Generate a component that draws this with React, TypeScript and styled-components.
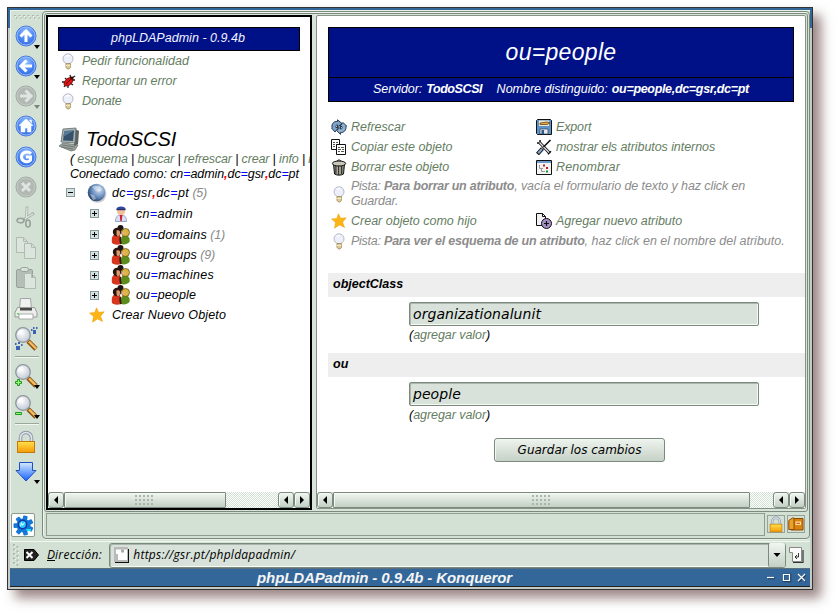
import React from 'react';
import styled, { createGlobalStyle } from 'styled-components';

const Global = createGlobalStyle`
  * { box-sizing: border-box; }
  body { margin: 0; background: #fff; overflow: hidden; }
`;

/* ---------- window ---------- */

const Desktop = styled.div`
  width: 836px;
  height: 613px;
  padding: 7px 0 0 7px;
  background: #fff;
  overflow: hidden;
  font: italic 12.5px/20px 'Liberation Sans', Arial, sans-serif;
  color: #000;
`;

const Window = styled.div`
  width: 806px;
  height: 583px;
  border: 1px solid #333;
  background: linear-gradient(#336699 0 20px, #c3cbc4 20px);
  padding: 2px 2px 2px 2px;
  box-shadow: 8px 8px 11px rgba(95, 62, 62, 0.62);
  display: flex;
  flex-direction: column;
`;

const Body = styled.div`
  display: flex;
  height: 531px;
  background: #d3e1d4;
  border-top: 1px solid #e9f1ea;
  border-left: 1px solid #eef4ee;
`;

const Toolbar = styled.div`
  width: 31px;
  display: flex;
  flex-direction: column;
  align-items: center;
  padding-top: 3px;
`;

const Slot = styled.div<{ $h?: number }>`
  width: 31px;
  height: ${(p) => p.$h ?? 30.4}px;
  flex: none;
  display: flex;
  align-items: center;
  justify-content: center;
  padding-right: 1px;
  position: relative;
`;

const DropMark = styled.i<{ $dim?: boolean }>`
  position: absolute;
  right: 2px;
  bottom: 2px;
  border: solid transparent;
  border-width: 4px 3.5px 0;
  border-top-color: ${(p) => (p.$dim ? '#7d857e' : '#000')};
`;

const ToolRule = styled.div`
  width: 24px;
  height: 2px;
  margin: 2px 0 2px;
  flex: none;
  border-top: 1px solid #9aa79b;
  border-bottom: 1px solid #f2f7f2;
`;

const GearTile = styled.div`
  width: 24px;
  height: 24px;
  margin-top: 27px;
  margin-right: 7px;
  flex: none;
  background: #fff;
  border: 1px solid #8b988c;
  border-radius: 2px;
  display: flex;
  align-items: center;
  justify-content: center;
`;

/* ---------- main frame ---------- */

const MainFrame = styled.div`
  flex: 1;
  height: 528px;
  border: 1px solid #7c8a7d;
  border-radius: 4px;
  box-shadow: inset 1px 1px #eef4ee, 0 1px #e8f0e8;
  padding: 1px;
  display: flex;
  flex-direction: column;
`;

const Frames = styled.div`
  height: 500px;
  border: 1px solid #7c8a7d;
  border-radius: 3px;
  background: #d8e4d9;
  padding: 1px;
  display: flex;
  gap: 4px;
`;

const Frame = styled.div<{ $active?: boolean }>`
  width: ${(p) => (p.$active ? '266px' : 'auto')};
  flex: ${(p) => (p.$active ? 'none' : '1')};
  height: ${(p) => (p.$active ? 495 : 494)}px;
  border: ${(p) => (p.$active ? '2px solid #000' : '1px solid #859286')};
  border-radius: ${(p) => (p.$active ? 0 : 2)}px;
  background: #fff;
  display: flex;
  flex-direction: column;
  overflow: hidden;
  white-space: nowrap;
`;

const FrameBody = styled.div<{ $pad: string }>`
  flex: 1;
  min-height: 0;
  padding: ${(p) => p.$pad};
  overflow: hidden;
`;

const ScrollBar = styled.div`
  height: 16px;
  flex: none;
  display: flex;
  background: repeating-conic-gradient(#d3e1d4 0 25%, #fff 0 50%) 0 0 / 2px 2px;
`;

const ScrollButton = styled.div`
  width: 16px;
  height: 16px;
  flex: none;
  border: 1px solid #7c8a7d;
  border-radius: 3px;
  background: linear-gradient(#f0f6f0, #c3cfc4);
  box-shadow: inset 1px 1px #f4f8f4;
  display: flex;
  align-items: center;
  justify-content: center;
`;

const Thumb = styled(ScrollButton)<{ $w: number }>`
  width: ${(p) => p.$w}px;
  border-radius: 1px;
`;

const Grip = styled.div`
  width: 20px;
  height: 12px;
  background: radial-gradient(circle at 1px 1px, #a9b6aa 1px, transparent 1.2px) 0 1px / 4px 4px;
`;

const Spacer = styled.div`
  flex: 1;
`;

const StatusBar = styled.div`
  flex: 1;
  display: flex;
  gap: 2px;
  padding: 1px 3px 1px 2px;
`;

const StatusCell = styled.div`
  flex: 1;
  height: 23px;
  border: 1px solid #8f9c90;
`;

const StatusIcon = styled.div`
  width: 18px;
  height: 18px;
  margin-top: 2px;
  border: 1px solid #97a398;
  display: flex;
  align-items: center;
  justify-content: center;
`;

/* ---------- text pieces ---------- */

const T = styled.span<{ $ls?: number }>`
  letter-spacing: ${(p) => p.$ls ?? 0}px;
  white-space: pre;
`;

const Link = styled(T)`
  color: #657d62;
`;

const Muted = styled(T)`
  color: #8c8c8c;
`;

const Strong = styled(T)`
  font-weight: bold;
`;

const Eq = styled.span`
  color: #0000ff;
`;

const Comma = styled.span`
  color: #ff0000;
  font-weight: bold;
`;

const Version = styled.div`
  width: 242px;
  height: 24px;
  border: 1px solid #000;
  background: #001188;
  color: #f2f2ff;
  text-align: center;
  line-height: 20px;
  padding-right: 2px;
`;

const IconRow = styled.div<{ $h?: number; $indent?: number }>`
  height: ${(p) => p.$h ?? 20}px;
  line-height: 20px;
  padding-left: ${(p) => p.$indent ?? 0}px;
  display: flex;
  align-items: center;
`;

const IconBox = styled.span<{ $w: number; $gap?: number }>`
  width: ${(p) => p.$w}px;
  margin-right: ${(p) => p.$gap ?? 0}px;
  flex: none;
  display: flex;
  justify-content: center;
  align-items: center;
`;

const ServerRow = styled.div`
  display: flex;
  align-items: center;
  height: 26px;
  margin-top: 15px;
  gap: 6px;
  font-size: 20px;
`;

const TextLine = styled.div`
  height: 15px;
  line-height: 15px;
  padding-left: 12px;
`;

const Expander = styled.span`
  width: 9px;
  height: 9px;
  flex: none;
  border: 1px solid #869a9a;
  background: linear-gradient(#000, #000) center / 5px 1px no-repeat, #d5e2e4;
`;

const ExpanderPlus = styled(Expander)`
  background: linear-gradient(#000, #000) center / 5px 1px no-repeat,
    linear-gradient(#000, #000) center / 1px 5px no-repeat, #d5e2e4;
`;

const Banner = styled.div`
  width: 466px;
  height: 75px;
  border: 1px solid #000;
  background: #001188;
  color: #fff;
  text-align: center;
`;

const BannerTitle = styled.div`
  height: 50px;
  line-height: 49px;
  font-size: 23px;
  border-bottom: 1px solid #000;
`;

const BannerInfo = styled.div`
  height: 23px;
  line-height: 22px;
  display: flex;
  justify-content: center;
  gap: 4px;
`;

const Actions = styled.div`
  display: grid;
  grid-template-columns: 205px 1fr;
  margin: 15px 0 22px;
`;

const Wide = styled.div`
  grid-column: 1 / -1;
`;

const Hint = styled.div`
  line-height: 15px;
  color: #8c8c8c;
`;

const AttrName = styled.div`
  height: 24px;
  line-height: 23px;
  background: #eeeeee;
  padding-left: 5px;
  font-weight: bold;
`;

const AttrBody = styled.div`
  height: 56px;
  padding: 5px 0 0 81px;
  line-height: 18px;
`;

const Field = styled.div`
  width: 350px;
  height: 24px;
  border: 1px solid #7c8a7d;
  border-radius: 2px;
  box-shadow: inset 1px 1px #aab6ab, inset -1px -1px #f5faf5;
  background: #d8e2da;
  padding-left: 3px;
  font: italic 14px/22px 'DejaVu Sans', sans-serif;
`;

const SaveButton = styled.div`
  width: 171px;
  height: 24px;
  margin: 5px 0 0 166px;
  border: 1px solid #7c8a7d;
  border-radius: 3px;
  box-shadow: inset 1px 1px #f2f7f2;
  background: linear-gradient(#eef4ee, #c6d1c7);
  font: italic 12px/22px 'DejaVu Sans', sans-serif;
  text-align: center;
`;

/* ---------- bottom bars ---------- */

const AddressBar = styled.div`
  height: 27px;
  background: #d3e1d4;
  border-top: 1px solid #f2f7f2;
  display: flex;
  align-items: center;
  padding: 0 6px 0 3px;
`;

const AddressLabel = styled.div`
  width: 66px;
  flex: none;
  padding-left: 4px;
  font: italic 12px/20px 'Open Sans', sans-serif;
`;

const Combo = styled.div`
  width: 677px;
  height: 25px;
  flex: none;
  border: 1px solid #7c8a7d;
  border-radius: 3px;
  background: #d8e2da;
  box-shadow: inset 1px 1px #a9b5aa, inset 0 -1px #f7fbf7;
  display: flex;
  align-items: center;
  padding-left: 3px;
  font: italic 12px/20px 'Open Sans', sans-serif;
`;

const ComboButton = styled.div`
  width: 17px;
  height: 24px;
  border-left: 1px solid #7c8a7d;
  border-radius: 2px;
  background: linear-gradient(#f0f6f0, #c3cfc4);
  display: flex;
  align-items: center;
  justify-content: center;
`;

const TitleBar = styled.div`
  height: 19px;
  background: #336699;
  border-bottom: 1px solid #222;
  border-top: 1px solid #5b6f7d;
  display: flex;
  align-items: center;
  justify-content: flex-end;
  gap: 8px;
  padding-right: 4px;
`;

const Title = styled.div`
  flex: 1;
  padding-left: 247px;
  color: #f4f4f4;
  font: italic bold 15px/17px 'Liberation Sans', Arial, sans-serif;
`;

/* ---------- icons ---------- */

const Gradients = styled.svg`
  position: absolute;
`;

const Defs = () => (
  <Gradients width="0" height="0">
    <defs>
      <radialGradient id="blue" cx=".5" cy=".3" r=".8">
        <stop offset="0" stopColor="#9cc4ff" />
        <stop offset=".5" stopColor="#4a86f2" />
        <stop offset="1" stopColor="#2c62dd" />
      </radialGradient>
      <linearGradient id="gold" x2="0" y2="1">
        <stop offset="0" stopColor="#ffe14a" />
        <stop offset="1" stopColor="#f59a08" />
      </linearGradient>
      <linearGradient id="down" x2="0" y2="1">
        <stop offset="0" stopColor="#d5eaff" />
        <stop offset="1" stopColor="#1560ff" />
      </linearGradient>
      <radialGradient id="glass" cx=".4" cy=".35" r=".7">
        <stop offset="0" stopColor="#ffffff" />
        <stop offset="1" stopColor="#bcc6d2" />
      </radialGradient>
      <radialGradient id="globe" cx=".65" cy=".35" r=".75">
        <stop offset="0" stopColor="#d4e0ee" />
        <stop offset=".5" stopColor="#6f95c4" />
        <stop offset="1" stopColor="#1c3764" />
      </radialGradient>
    </defs>
  </Gradients>
);

const Round = ({ d, dim, fill }: { d: string; dim?: boolean; fill?: boolean }) => (
  <svg width="22" height="22" viewBox="0 0 22 22">
    <circle cx="11" cy="11" r="10" fill={dim ? '#b2b9b3' : 'url(#blue)'} stroke={dim ? '#a1a9a2' : '#4878dc'} />
    <circle cx="11" cy="11" r="9" fill="none" stroke={dim ? '#c8cec9' : '#a9c8ff'} strokeWidth=".8" />
    <path
      d={d}
      fill={fill ? (dim ? '#dfe5e0' : '#fff') : 'none'}
      stroke={dim ? '#dfe5e0' : '#fff'}
      strokeWidth={fill ? 0.5 : 3}
    />
  </svg>
);

const Scissors = () => (
  <svg width="20" height="24" viewBox="0 0 20 24" fill="none">
    <path d="M11 1.500 10.500 14M18 8 8 14.500" stroke="#a9b2aa" strokeWidth="2.800" />
    <path d="M11 2.500 10.500 13M17 8.800 9 13.800" stroke="#dde5de" strokeWidth="1.200" />
    <ellipse cx="4.500" cy="15.500" rx="3.500" ry="2.300" stroke="#98a199" strokeWidth="1.600" />
    <ellipse cx="12" cy="18.500" rx="2.200" ry="3.500" stroke="#98a199" strokeWidth="1.600" />
  </svg>
);

const Pages = () => (
  <svg width="22" height="24" viewBox="0 0 22 24" fill="#dce5dd" stroke="#b0bab1">
    <path d="M1.500 1.500h7l4 4v11h-11zM8.500 1.500v4h4" />
    <path d="M9.500 7.500h7l4 4v11h-11zM16.500 7.500v4h4" />
  </svg>
);

const Paste = () => (
  <svg width="22" height="24" viewBox="0 0 22 24" stroke="#98a299">
    <rect x="1.500" y="3.500" width="16" height="18" rx="1.500" fill="#b5beb6" />
    <rect x="5.500" y="1.500" width="8" height="4" rx="2" fill="#d9e0da" />
    <path d="M9.500 7.500h7l4 4v11h-11zM16.500 7.500v4h4" fill="#dce5dd" stroke="#b0bab1" />
  </svg>
);

const Printer = () => (
  <svg width="24" height="24" viewBox="0 0 24 24">
    <path d="M6.500 1.500h10l1 10h-12z" fill="#f1f1f1" stroke="#a5a5a5" />
    <path d="M3.500 10.500h17l2.500 5v4.500H1v-4.500z" fill="#ececec" stroke="#9a9a9a" />
    <path d="M6 11h12v2.500H6z" fill="#4a4a4a" />
    <path d="M5 17h14v5H5z" fill="#fff" stroke="#999" strokeWidth=".8" />
    <path d="M3 16h2v1.500H3z" fill="#5d5" />
  </svg>
);

const Magnifier = ({ kind }: { kind: 'plus' | 'minus' | 'paw' }) => (
  <svg width="24" height="25" viewBox="0 0 24 25">
    <path d="m14 15 8 8" stroke="#8a5514" strokeWidth="4.600" />
    <path d="m15 15.500 7 7" stroke="#f7bd62" strokeWidth="2.400" />
    <circle cx="9" cy="9" r="7.300" fill="url(#glass)" stroke="#8d949e" strokeWidth="1.300" />
    <path d="M4.500 9A4.500 4.500 0 0 1 9 4.500" fill="none" stroke="#fff" strokeWidth="1.500" />
    {kind === 'paw' ? (
      <g fill="#3b63b5">
        <path d="M2 20h4v4H2zM1 17h1.500v2H1zM4 16h2v2H4zM7 18h1.500v2H7z" />
        <path d="M19 4h3v4h-3zM17 3h1.500v2H17zM19 1h1.500v2H19zM22 1h1.500v2H22z" />
      </g>
    ) : kind === 'plus' ? (
      <path d="M3.500 16.500h2v2h2v2h-2v2h-2v-2h-2v-2h2z" fill="#9df77a" stroke="#1b9a1b" />
    ) : (
      <path d="M1.500 18.500h6v2h-6z" fill="#9df77a" stroke="#1b9a1b" />
    )}
  </svg>
);

const Lock = ({ w = 20, h = 24 }: { w?: number; h?: number }) => (
  <svg width={w} height={h} viewBox="0 0 20 24">
    <path d="M4.500 12V8a5.500 5.500 0 0 1 11 0v4" fill="none" stroke="#8e98a8" strokeWidth="3.600" />
    <path d="M4.500 12V8a5.500 5.500 0 0 1 11 0v4" fill="none" stroke="#dfe5ee" strokeWidth="1.600" />
    <rect x="1.500" y="11.500" width="17" height="11" fill="url(#gold)" stroke="#c27a0a" />
  </svg>
);

const DownArrow = () => (
  <svg width="22" height="21" viewBox="0 0 22 21">
    <path d="M4.500 1.500h13v8h3.500L11 20 1 9.500h3.500z" fill="url(#down)" stroke="#1c50c0" />
  </svg>
);

const Gear = () => (
  <svg width="21" height="21" viewBox="0 0 21 21">
    <g fill="#1478d8">
      {[0, 51, 103, 154, 206, 257, 309].map((a) => (
        <rect key={a} x="8.200" y="0.500" width="4.600" height="7" rx="1" transform={`rotate(${a + 12} 10.500 10.500)`} />
      ))}
      <circle cx="10.500" cy="10.500" r="7" />
    </g>
    <circle cx="9.500" cy="9.500" r="4.200" fill="#24c8ff" stroke="#1238a8" strokeWidth="1.500" />
    <path d="m7.500 11.500 1-4 1 3 2-3" stroke="#e0ffff" fill="none" />
    <path d="M13 14h5v2h-4z" fill="#1de6f2" />
  </svg>
);

const Bulb = () => (
  <svg width="14" height="17" viewBox="0 0 14 17">
    <circle cx="7" cy="5.800" r="5" fill="#edf0fa" stroke="#b4b7c6" />
    <path d="M5 3.500a3 3 0 0 1 3-1" stroke="#fff" fill="none" strokeWidth="1.500" />
    <path d="M5 10.500h4.500v4L8 16H6.500L5 14.500z" fill="#dcc893" stroke="#9c8b62" strokeWidth=".8" />
    <path d="M5 12.500h4.500" stroke="#fff2c8" strokeWidth=".8" />
  </svg>
);

const Bug = () => (
  <svg width="15" height="15" viewBox="0 0 15 15">
    <path d="M1 8h3M3 13l2-3M7 14V11M4 4l2 2M9 1l1 3M14 2l-3 2M14 6h-4M12 11l-3-2" stroke="#222" strokeWidth="1.300" />
    <ellipse cx="7.500" cy="7.800" rx="5.300" ry="3.200" fill="#dd1414" stroke="#600" strokeWidth=".7" transform="rotate(-42 7.500 7.800)" />
    <path d="m5 10 6-6" stroke="#500" />
    <circle cx="11" cy="4" r="1.500" fill="#300" />
  </svg>
);

const Computer = () => (
  <svg width="22" height="25" viewBox="0 0 22 25">
    <path d="m1 19 4-3 15 2-3 5-4 1z" fill="#9aa39e" stroke="#6e7672" strokeWidth=".8" />
    <path d="m4 18 13 2M3 20l12 2" stroke="#606964" strokeWidth=".7" />
    <path d="m17 2 4 2-1 13-4 2z" fill="#59635f" />
    <path d="m5 2 13-1-1 15-14-1z" fill="#aab4b3" stroke="#606b69" strokeWidth=".8" />
    <path d="m6.500 4 9.500-.5-1 10.500-10-.5z" fill="#35516c" />
    <path d="m6.500 4 9.500-.5-11 6.500z" fill="#587a98" />
  </svg>
);

const Globe = () => (
  <svg width="20" height="20" viewBox="0 0 20 20">
    <circle cx="10.500" cy="10.800" r="9" fill="#ccc" />
    <circle cx="9.500" cy="9.500" r="8.800" fill="url(#globe)" />
    <path d="M5 4c3-2 5 0 8-1l2 4-4 2-3-2zM3 11l4 1 2 4-3 1z" fill="#fff" opacity=".4" />
  </svg>
);

const Person = () => (
  <svg width="14" height="17" viewBox="0 0 14 17">
    <path d="M1.500 16.500c0-5 2-6.500 5.500-6.500s5.500 1.500 5.500 6.500z" fill="#d9e0f5" stroke="#9ba5c9" />
    <path d="m6.200 10 .8 6 1-6z" fill="#d11a2a" stroke="#d11a2a" />
    <circle cx="7" cy="6" r="4" fill="#f4bf98" />
    <path d="M2.300 4.500C2 .5 12 .5 11.700 4.500z" fill="#2f48a4" />
    <path d="M2.500 4.700h9" stroke="#111b50" />
  </svg>
);

const People = () => (
  <svg width="20" height="20" viewBox="0 0 20 20">
    <circle cx="9.500" cy="3" r="3" fill="#20140f" />
    <path d="M1 18c-1-6 1-9 5-9 3 0 5 3 4 10-3 1-7 1-9-1z" fill="#d9341c" />
    <path d="M10 19c-1-6 1-9 4-9s5.500 3 4.500 7c-2 2-5 3-8.500 2z" fill="#5c8c1c" />
    <circle cx="6" cy="7" r="4.200" fill="#26160f" />
    <path d="M5.500 5.500c2-1 4.500 0 3.500 3.500s-3.500 2-3.500 0z" fill="#dc9968" />
    <circle cx="14.500" cy="7.500" r="4" fill="#dcb63c" stroke="#5b4518" strokeWidth=".7" />
    <path d="M11 7c1-1 3.500-1 3.500 1s-2.500 3-3.500 1z" fill="#e8ad78" />
    <path d="M9.500 12c-1 2 0 5 .5 7" stroke="#2b1a10" strokeWidth="1.600" fill="none" />
  </svg>
);

const Star = () => (
  <svg width="16" height="16" viewBox="0 0 16 16">
    <path d="m7.500.8 2.100 4.500 5.600-.5-3.600 4.400 2 5.300-5-2.600-5.100 3.300 1-5.900L.5 6l5.200-.5z" fill="#fdb515" stroke="#e99a0a" strokeWidth=".5" />
  </svg>
);

const Refresh = () => (
  <svg width="16" height="16" viewBox="0 0 16 16">
    <path d="M1 8.500C.5 4.500 3 2 6.500 2.500V.8L11 4.500 6.500 8V6C5 6 4.500 7 5 8.500L7.500 8.500 4 13 .5 9z" fill="#7fa4cb" stroke="#25384e" strokeWidth="1" />
    <path d="M15 7c.5 4-2 6.800-5.500 6.500v1.800L5.500 11.500 9.500 8v2c1.500 0 2-1 1.500-2.500H8.800L12 3.500 15.500 7z" fill="#8fb0d2" stroke="#25384e" strokeWidth="1" />
  </svg>
);

const Copy = () => (
  <svg width="16" height="16" viewBox="0 0 16 16" fill="#fff" stroke="#111">
    <path d="M.5.5h8v10h-8z" />
    <path d="M2 3.500h2m1 0h2M2 5.500h2m1 0h2M2 7.500h2" stroke="#555" />
    <path d="M5.500 5.500h9v10h-9z" />
    <path d="M7 8.500h2m1 0h3M7 10.500h3m1 0h2M7 12.500h2m1 0h3" stroke="#555" />
  </svg>
);

const Trash = () => (
  <svg width="16" height="17" viewBox="0 0 16 17">
    <path d="m2.500 5 1 10c2 1.500 7 1.500 9 0l1-10z" fill="#8d8b7d" stroke="#111" />
    <path d="M5 7v8M7.500 7v9M10.500 7v8" stroke="#34332c" strokeWidth="1.200" />
    <path d="M6.200 7v8M9 7v8" stroke="#cfcdbc" strokeWidth=".8" />
    <ellipse cx="8" cy="4.500" rx="6.700" ry="2.500" fill="#c9c7b8" stroke="#111" />
    <path d="M6 2.500C6 .5 10 .5 10 2.500" stroke="#111" fill="none" />
  </svg>
);

const Floppy = () => (
  <svg width="16" height="16" viewBox="0 0 16 16">
    <path d="M.5 1.500 1.500.500h13l1 1v14h-14l-1-1z" fill="#5c93c8" stroke="#111" />
    <path d="M3 1.500h10v5.500H3z" fill="#f1e6cc" />
    <path d="m4 4 7-1 3 1-3 1.500H4z" fill="#e9a83c" stroke="#513b13" strokeWidth=".7" />
    <path d="M4 10h8v5H4z" fill="#e2e6ea" stroke="#234" strokeWidth=".6" />
    <path d="M5.500 11h2.500v4H5.500z" fill="#2d5d8f" />
  </svg>
);

const Tools = () => (
  <svg width="16" height="16" viewBox="0 0 16 16" fill="none">
    <path d="m3.500 3.500 10 10.500" stroke="#111" strokeWidth="3" />
    <path d="M1 4h3V1M12 15.200l3-3" stroke="#111" strokeWidth="1.500" />
    <path d="m3.500 3.500 9.500 10" stroke="#e2e2e2" strokeWidth="1.200" />
    <path d="m14.500 1-7 7" stroke="#111" strokeWidth="1.600" />
    <path d="m6.500 9.500-5 5.500" stroke="#111" strokeWidth="4" />
    <path d="m6 10-3.800 4.200" stroke="#7fa6d0" strokeWidth="2.200" />
  </svg>
);

const Rename = () => (
  <svg width="16" height="15" viewBox="0 0 16 15">
    <path d="M.5.5h15v14H.5z" fill="#f3f3f3" stroke="#111" />
    <path d="M1 1h14v2H1z" fill="#6d9bcf" />
    <path d="M3.500 5v3.500H7M5.500 8.500v3H9" stroke="#999" fill="none" />
    <path d="M7 4.500h2v2H7z" fill="#c01c1c" />
    <path d="M10 7h2v2h-2z" fill="#c01c1c" />
    <path d="M10 10.500h2v2h-2z" fill="#1d8d2a" />
  </svg>
);

const AddAttr = () => (
  <svg width="16" height="16" viewBox="0 0 16 16">
    <path d="M.5.5h6l3 3v9h-9zM6.500.5v3h3" fill="#f1f1f4" stroke="#111" />
    <circle cx="10.500" cy="10.500" r="5" fill="#a58fc4" stroke="#111" />
    <path d="M10.500 8v5M8 10.500h5" stroke="#111" strokeWidth="1.200" />
  </svg>
);

const Folder = () => (
  <svg width="16" height="16" viewBox="0 0 16 16">
    <path d="M5 2.500h10V14H3z" fill="#d9820e" stroke="#8c4c04" />
    <path d="m.8 4.500 3.700-2.500h1.500v11.500l-5.200 0z" fill="#eda02a" stroke="#8c4c04" />
    <path d="M7.500 5.500H13V9H7.500z" fill="#ffdca0" />
    <path d="M8.500 7.300h3.500" stroke="#c04a00" />
  </svg>
);

const Handle = () => (
  <svg width="26" height="6" viewBox="0 0 26 6">
    {[0, 1, 2, 3, 4, 5].map((i) => (
      <g key={i}>
        <path d={`M${i * 4.5} 1h2v1.500h-2zM${i * 4.5 + 2} 3.500h2V5h-2z`} fill="#aab7ab" />
        <path d={`M${i * 4.5 + 1} 2h1v1h-1zM${i * 4.5 + 3} 4.500h1v1h-1z`} fill="#fff" />
      </g>
    ))}
  </svg>
);

const VHandle = () => (
  <svg width="7" height="22" viewBox="0 0 7 22">
    {[0, 1, 2, 3, 4].map((i) => (
      <g key={i}>
        <path d={`M0 ${i * 4.5}h2v2H0zM3.500 ${i * 4.5 + 2}h2v2h-2z`} fill="#aab7ab" />
        <path d={`M1.500 ${i * 4.5 + 1.5}h1v1h-1zM5 ${i * 4.5 + 3.5}h1v1H5z`} fill="#fff" />
      </g>
    ))}
  </svg>
);

const ClearTag = () => (
  <svg width="15" height="12" viewBox="0 0 15 12">
    <path d="M.5.5h9.500l4.500 5.500-4.500 5.500H.5z" fill="#222" stroke="#000" />
    <path d="m2.500 3 6 6M8.500 3l-6 6" stroke="#fff" strokeWidth="2" />
  </svg>
);

const PageIcon = () => (
  <svg width="17" height="16" viewBox="0 0 17 16">
    <path d="M2 2h14v14H2z" fill="#111" />
    <path d="M1 0h14v15H1z" fill="#b9b9b9" />
    <path d="M3 2.500h11V13H5V7H3z" fill="#fff" />
    <path d="M8 2.500h3v3H8z" fill="#aaa" />
  </svg>
);

const GoIcon = () => (
  <svg width="15" height="17" viewBox="0 0 15 17">
    <path d="M4 15.500h10V3" stroke="#333" strokeWidth="1.200" fill="none" />
    <path d="M.5.5h12v14H3.500v-9h-3z" fill="#fafafa" stroke="#888" />
    <path d="M9.500 6v4H6m2-2-2 2 2 2" stroke="#333" fill="none" />
  </svg>
);

const Tri = ({ dir }: { dir: 'left' | 'right' | 'down' }) => (
  <svg width="8" height="8" viewBox="0 0 8 8">
    <path d={dir === 'left' ? 'M6 0v8L2 4z' : dir === 'right' ? 'M2 0v8l4-4z' : 'M.5 2h7L4 6z'} />
  </svg>
);

const WindowButtons = () => (
  <svg width="40" height="12" viewBox="0 0 40 12" fill="none">
    <g stroke="#1c3f63" strokeWidth="1.500">
      <path d="M2 6.500h7M18 2.500h6.500v7H18zM33 3l7 7M40 3l-7 7" />
    </g>
    <g stroke="#fff" strokeWidth="1.200">
      <path d="M1 5.500h7" />
      <path d="M17.500 2.500h6v6h-6z" />
      <path d="m32 2 7 7M39 2l-7 7" />
    </g>
  </svg>
);

/* ---------- composite pieces ---------- */

const Dn = ({ text, ls }: { text: string; ls?: number }) => (
  <T $ls={ls}>
    {text.split(/([=,])/).map((s, i) => (s === '=' ? <Eq key={i}>=</Eq> : s === ',' ? <Comma key={i}>,</Comma> : s))}
  </T>
);

const Scroll = ({ thumb }: { thumb: number }) => (
  <ScrollBar>
    <ScrollButton><Tri dir="left" /></ScrollButton>
    <Thumb $w={thumb}><Grip /></Thumb>
    <Spacer />
    <ScrollButton><Tri dir="left" /></ScrollButton>
    <ScrollButton><Tri dir="right" /></ScrollButton>
  </ScrollBar>
);

const Action = ({ icon, label, ls }: { icon: React.ReactNode; label: string; ls?: number }) => (
  <IconRow $indent={2}>
    <IconBox $w={17} $gap={4}>{icon}</IconBox>
    <Link $ls={ls}>{label}</Link>
  </IconRow>
);

const TreeRow = ({ name, ls, count, h, icon }: { name: string; ls: number; count?: string; h?: number; icon?: React.ReactNode }) => (
  <IconRow $indent={32} $h={h}>
    <ExpanderPlus />
    <IconBox $w={20} $gap={5}>{icon ?? <People />}</IconBox>
    <Dn text={name} ls={ls} />
    {count && <Muted $ls={-0.2}> {count}</Muted>}
  </IconRow>
);

const TreeIndent = styled.div`
  ${IconRow} > ${IconBox} {
    margin-left: 12px;
  }
`;

const Attribute = ({ name, value, ls }: { name: string; value: string; ls: number }) => (
  <>
    <AttrName>{name}</AttrName>
    <AttrBody>
      <Field><T $ls={ls}>{value}</T></Field>
      (<Link $ls={-0.06}>agregar valor</Link>)
    </AttrBody>
  </>
);

const menu = ['esquema', 'buscar', 'refrescar', 'crear', 'info', 'i'];

export default function App() {
  return (
    <Desktop>
      <Global />
      <Defs />
      <Window>
        <Body>
          <Toolbar>
            <Handle />
            <Slot $h={31}><Round d="M11 17V8M5.500 11.500 11 6l5.500 5.500" /><DropMark /></Slot>
            <Slot $h={30}><Round d="M17 11H8M11.500 5.500 6 11l5.500 5.500" /><DropMark /></Slot>
            <Slot $h={30}><Round dim d="M5 11h9M10.500 5.500 16 11l-5.500 5.500" /><DropMark $dim /></Slot>
            <Slot><Round fill d="M11 4 4 10.500h2V17h4v-4h2.500v4H16v-6.500h2zM14.500 5h2v3z" /></Slot>
            <Slot><Round d="M16 7.500C12.500 4.500 6.500 6 6.500 11c0 5 6.500 6 9 3v-3H11" /></Slot>
            <Slot><Round dim d="m7 7 8 8M15 7l-8 8" /></Slot>
            <Slot><Scissors /></Slot>
            <Slot><Pages /></Slot>
            <Slot><Paste /></Slot>
            <Slot><Printer /></Slot>
            <Slot><Magnifier kind="paw" /></Slot>
            <ToolRule />
            <Slot $h={31}><Magnifier kind="plus" /><DropMark /></Slot>
            <Slot $h={30}><Magnifier kind="minus" /><DropMark /></Slot>
            <ToolRule />
            <Slot $h={30}><Lock /></Slot>
            <Slot $h={29}><DownArrow /><DropMark /></Slot>
            <GearTile><Gear /></GearTile>
          </Toolbar>

          <MainFrame>
            <Frames>
              <Frame $active>
                <FrameBody $pad="10px 0 0 10px">
                  <Version><T $ls={0.03}>phpLDAPadmin - 0.9.4b</T></Version>
                  <IconRow><IconBox $w={20} $gap={4}><Bulb /></IconBox><Link $ls={0.03}>Pedir funcionalidad</Link></IconRow>
                  <IconRow><IconBox $w={20} $gap={4}><Bug /></IconBox><Link $ls={-0.08}>Reportar un error</Link></IconRow>
                  <IconRow><IconBox $w={20} $gap={4}><Bulb /></IconBox><Link $ls={-0.1}>Donate</Link></IconRow>
                  <ServerRow><Computer /><T>TodoSCSI</T></ServerRow>
                  <TextLine>
                    <T $ls={-0.15}>
                      {'( '}
                      {menu.map((m, i) => (
                        <React.Fragment key={m}>{i > 0 && ' | '}<Link $ls={-0.15}>{m}</Link></React.Fragment>
                      ))}
                    </T>
                  </TextLine>
                  <TextLine><T $ls={-0.08}>Conectado como: </T><Dn text="cn=admin,dc=gsr,dc=pt" ls={-0.08} /></TextLine>
                  <TreeIndent>
                    <IconRow $indent={8} $h={21}>
                      <Expander />
                      <IconBox $w={20} $gap={5}><Globe /></IconBox>
                      <Dn text="dc=gsr,dc=pt" ls={0.4} /><Muted $ls={-0.2}> (5)</Muted>
                    </IconRow>
                    <TreeRow name="cn=admin" ls={0.3} h={21} icon={<Person />} />
                    <TreeRow name="ou=domains" ls={0.25} count="(1)" h={21} />
                    <TreeRow name="ou=groups" ls={0.17} count="(9)" />
                    <TreeRow name="ou=machines" ls={0.3} />
                    <TreeRow name="ou=people" ls={0.14} />
                  </TreeIndent>
                  <IconRow $indent={30}><IconBox $w={17} $gap={7}><Star /></IconBox><T $ls={0.16}>Crear Nuevo Objeto</T></IconRow>
                </FrameBody>
                <Scroll thumb={162} />
              </Frame>

              <Frame>
                <FrameBody $pad="11px 0 0 11px">
                  <Banner>
                    <BannerTitle><T $ls={0.32}>ou=people</T></BannerTitle>
                    <BannerInfo>
                      <T $ls={-0.11}>Servidor:</T><Strong $ls={-0.4}>TodoSCSI</Strong>
                      <T>{'   '}Nombre distinguido:</T><Strong $ls={-0.32}>ou=people,dc=gsr,dc=pt</Strong>
                    </BannerInfo>
                  </Banner>
                  <Actions>
                    <Action icon={<Refresh />} label="Refrescar" />
                    <Action icon={<Floppy />} label="Export" ls={-0.15} />
                    <Action icon={<Copy />} label="Copiar este objeto" />
                    <Action icon={<Tools />} label="mostrar els atributos internos" ls={-0.07} />
                    <Action icon={<Trash />} label="Borrar este objeto" ls={-0.07} />
                    <Action icon={<Rename />} label="Renombrar" ls={0.16} />
                    <Wide>
                      <IconRow $indent={2} $h={34}>
                        <IconBox $w={17} $gap={4}><Bulb /></IconBox>
                        <Hint>
                          <T $ls={-0.25}>Pista: </T><Strong $ls={-0.26}>Para borrar un atributo</Strong>
                          <T $ls={-0.1}>, vacía el formulario de texto y haz click en</T><br /><T $ls={-0.2}>Guardar.</T>
                        </Hint>
                      </IconRow>
                    </Wide>
                    <Action icon={<Star />} label="Crear objeto como hijo" />
                    <Action icon={<AddAttr />} label="Agregar nuevo atributo" ls={-0.05} />
                    <Wide>
                      <IconRow $indent={2}>
                        <IconBox $w={17} $gap={4}><Bulb /></IconBox>
                        <Hint>
                          <T $ls={-0.25}>Pista: </T><Strong $ls={-0.21}>Para ver el esquema de un atributo</Strong>
                          <T>, haz click en el nombre del atributo.</T>
                        </Hint>
                      </IconRow>
                    </Wide>
                  </Actions>
                  <Attribute name="objectClass" value="organizationalunit" ls={0.06} />
                  <Attribute name="ou" value="people" ls={0.06} />
                  <SaveButton>Guardar los cambios</SaveButton>
                </FrameBody>
                <Scroll thumb={417} />
              </Frame>
            </Frames>
            <StatusBar>
              <StatusCell />
              <StatusIcon><Lock w={14} h={17} /></StatusIcon>
              <StatusIcon><Folder /></StatusIcon>
            </StatusBar>
          </MainFrame>
        </Body>

        <AddressBar>
          <VHandle />
          <IconBox $w={23}><ClearTag /></IconBox>
          <AddressLabel><u>D</u><T $ls={0.3}>irección:</T></AddressLabel>
          <Combo>
            <PageIcon />
            <T $ls={0.23}> https://gsr.pt/phpldapadmin/</T>
            <Spacer />
            <ComboButton><Tri dir="down" /></ComboButton>
          </Combo>
          <Spacer />
          <GoIcon />
        </AddressBar>
        <TitleBar>
          <Title><T $ls={-0.1}>phpLDAPadmin - 0.9.4b - Konqueror</T></Title>
          <WindowButtons />
        </TitleBar>
      </Window>
    </Desktop>
  );
}
